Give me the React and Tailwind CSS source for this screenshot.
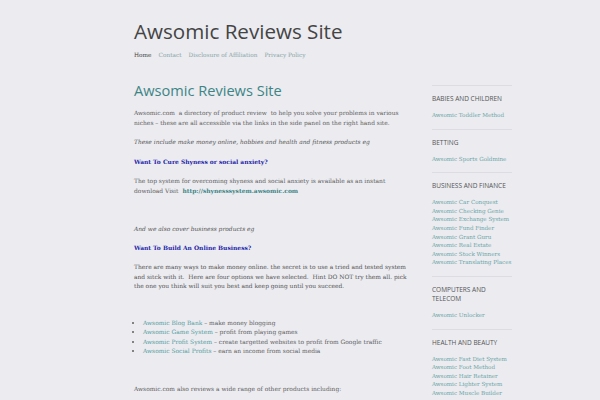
export default function App() {
  const serif = { fontFamily: '"DejaVu Serif", serif' };
  const businessLinks = [
    "Awsomic Car Conquest",
    "Awsomic Checking Genie",
    "Awsomic Exchange System",
    "Awsomic Fund Finder",
    "Awsomic Grant Guru",
    "Awsomic Real Estate",
    "Awsomic Stock Winners",
    "Awsomic Translating Places",
  ];
  const healthLinks = [
    "Awsomic Fast Diet System",
    "Awsomic Foot Method",
    "Awsomic Hair Retainer",
    "Awsomic Lighter System",
    "Awsomic Muscle Builder",
  ];
  const products = [
    ["Awsomic Blog Bank", "make money blogging"],
    ["Awsomic Game System", "profit from playing games"],
    ["Awsomic Profit System", "create targetted websites to profit from Google traffic"],
    ["Awsomic Social Profits", "earn an income from social media"],
  ];

  return (
    <div className="h-[400px] w-[600px] overflow-hidden bg-[#ebebf0] pl-[134px] text-[#555]">
      <header className="pt-[20px]">
        <h1
          className="text-[20.6px] leading-[22px] text-[#444]"
          style={{ fontFamily: '"Open Sans", sans-serif' }}
        >
          Awsomic Reviews Site
        </h1>
        <nav className="mt-[9px] flex gap-[7px] text-[5.8px] leading-[8px] text-[#8aa6a6]" style={serif}>
          <span className="text-[#444]">Home</span>
          <span>Contact</span>
          <span>Disclosure of Affiliation</span>
          <span>Privacy Policy</span>
        </nav>
      </header>

      <div className="mt-[21px] flex">
        <main className="w-[278px] text-[5.95px] leading-[10px] text-[#5f5f5f]" style={serif}>
          <h2
            className="text-[14.6px] leading-[20px] text-[#3d8585]"
            style={{ fontFamily: '"Open Sans", sans-serif' }}
          >
            Awsomic Reviews Site
          </h2>
          <p className="mt-[8px] pr-[8px]">
            Awsomic.com&nbsp; a directory of product review&nbsp; to help you solve your problems in various
            niches – these are all accessible via the links in the side panel on the right hand site.
          </p>
          <p className="mt-[9px] italic text-[#555]">
            These include make money online, hobbies and health and fitness products eg
          </p>
          <p className="mt-[10px] font-bold text-[#2424a8]">Want To Cure Shyness or social anxiety?</p>
          <p className="mt-[9px] pr-[8px]">
            <span>The top system for overcoming shyness and social anxiety is available as an instant</span>
            <br />
            <span>download Visit</span>
            <span className="ml-[4px] font-bold text-[#3d8585]">http://shynesssystem.awsomic.com</span>
          </p>
          <p className="mt-[28px] italic text-[#555]">And we also cover business products eg</p>
          <p className="mt-[9px] font-bold text-[#2424a8]">Want To Build An Online Business?</p>
          <p className="mt-[9px] leading-[9.5px] text-[#555]">
            There are many ways to make money online. the secret is to use a tried and tested system
            and sitck with it.&nbsp; Here are four options we have selected.&nbsp; Hint DO NOT try them all. pick the
            one you think will suit you best and keep going until you succeed.
          </p>
          <ul className="mt-[27px] list-disc pl-[9px] leading-[9.6px]">
            {products.map(([name, desc]) => (
              <li key={name}>
                <span className="text-[#56a0a0]">{name}</span> – {desc}
              </li>
            ))}
          </ul>
          <p className="mt-[28px]">Awsomic.com also reviews a wide range of other products including:</p>
        </main>

        <aside
          className="ml-[20px] mt-[5px] w-[80px] text-[6px]"
          style={{ fontFamily: '"Open Sans", sans-serif' }}
        >
          <SideBlock title={["BABIES AND CHILDREN"]} links={["Awsomic Toddler Method"]} />
          <SideBlock title={["BETTING"]} links={["Awsomic Sports Goldmine"]} />
          <SideBlock title={["BUSINESS AND FINANCE"]} links={businessLinks} />
          <SideBlock title={["COMPUTERS AND", "TELECOM"]} links={["Awsomic Unlocker"]} />
          <SideBlock title={["HEALTH AND BEAUTY"]} links={healthLinks} />
        </aside>
      </div>
    </div>
  );
}

function SideBlock({ title, links }) {
  return (
    <div className="border-t border-[#dcdce2] pt-[8px] pb-[9px]">
      <h3 className="text-[6.5px] leading-[9px] text-[#555]">
        {title.map((t) => (
          <div key={t}>{t}</div>
        ))}
      </h3>
      <ul
        className="mt-[8px] text-[5.6px] leading-[8.6px] text-[#6aa5a5]"
        style={{ fontFamily: '"DejaVu Serif", serif' }}
      >
        {links.map((l) => (
          <li key={l}>{l}</li>
        ))}
      </ul>
    </div>
  );
}
